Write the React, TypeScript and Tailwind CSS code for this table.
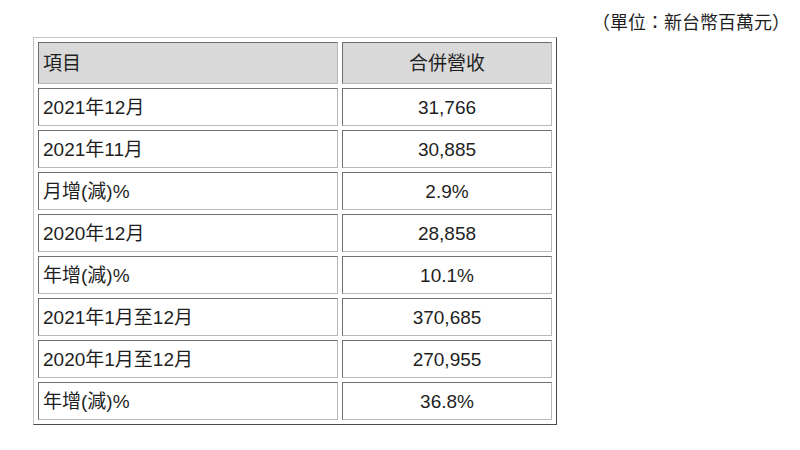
import React from "react";

const rows: [string, string][] = [
  ["2021年12月", "31,766"],
  ["2021年11月", "30,885"],
  ["月增(減)%", "2.9%"],
  ["2020年12月", "28,858"],
  ["年增(減)%", "10.1%"],
  ["2021年1月至12月", "370,685"],
  ["2020年1月至12月", "270,955"],
  ["年增(減)%", "36.8%"],
];

const cell =
  "border border-t-[#6e6e6e] border-l-[#6e6e6e] border-b-[#b8b8b8] border-r-[#b8b8b8] flex items-center pt-[2px]";

export default function App() {
  return (
    <div
      className="w-[800px] h-[450px] bg-white text-[#1f1f1f] text-[19px]"
      style={{ fontFamily: '"Liberation Sans", "Noto Sans CJK TC", sans-serif' }}
    >
      <div className="pt-[11px] h-[37px] flex justify-end pr-[10px]">
        <div className="h-[24px] leading-[24px] flex text-[18px]">
          <span>（單位：</span>
          <span>新台幣百萬元）</span>
        </div>
      </div>
      <div className="ml-[33px] w-fit border border-t-[#c4c4c4] border-l-[#c4c4c4] border-b-[#4a4a4a] border-r-[#4a4a4a] p-[4px] grid grid-cols-[300px_210px] gap-[4px]">
        <div className={`${cell} h-[42px] bg-[#d9d9d9] pl-[4px]`}>項目</div>
        <div className={`${cell} h-[42px] bg-[#d9d9d9] justify-center`}>合併營收</div>
        {rows.map(([a, b], i) => (
          <React.Fragment key={i}>
            <div className={`${cell} h-[38px] pl-[4px]`}>{a}</div>
            <div className={`${cell} h-[38px] justify-center`}>{b}</div>
          </React.Fragment>
        ))}
      </div>
    </div>
  );
}
